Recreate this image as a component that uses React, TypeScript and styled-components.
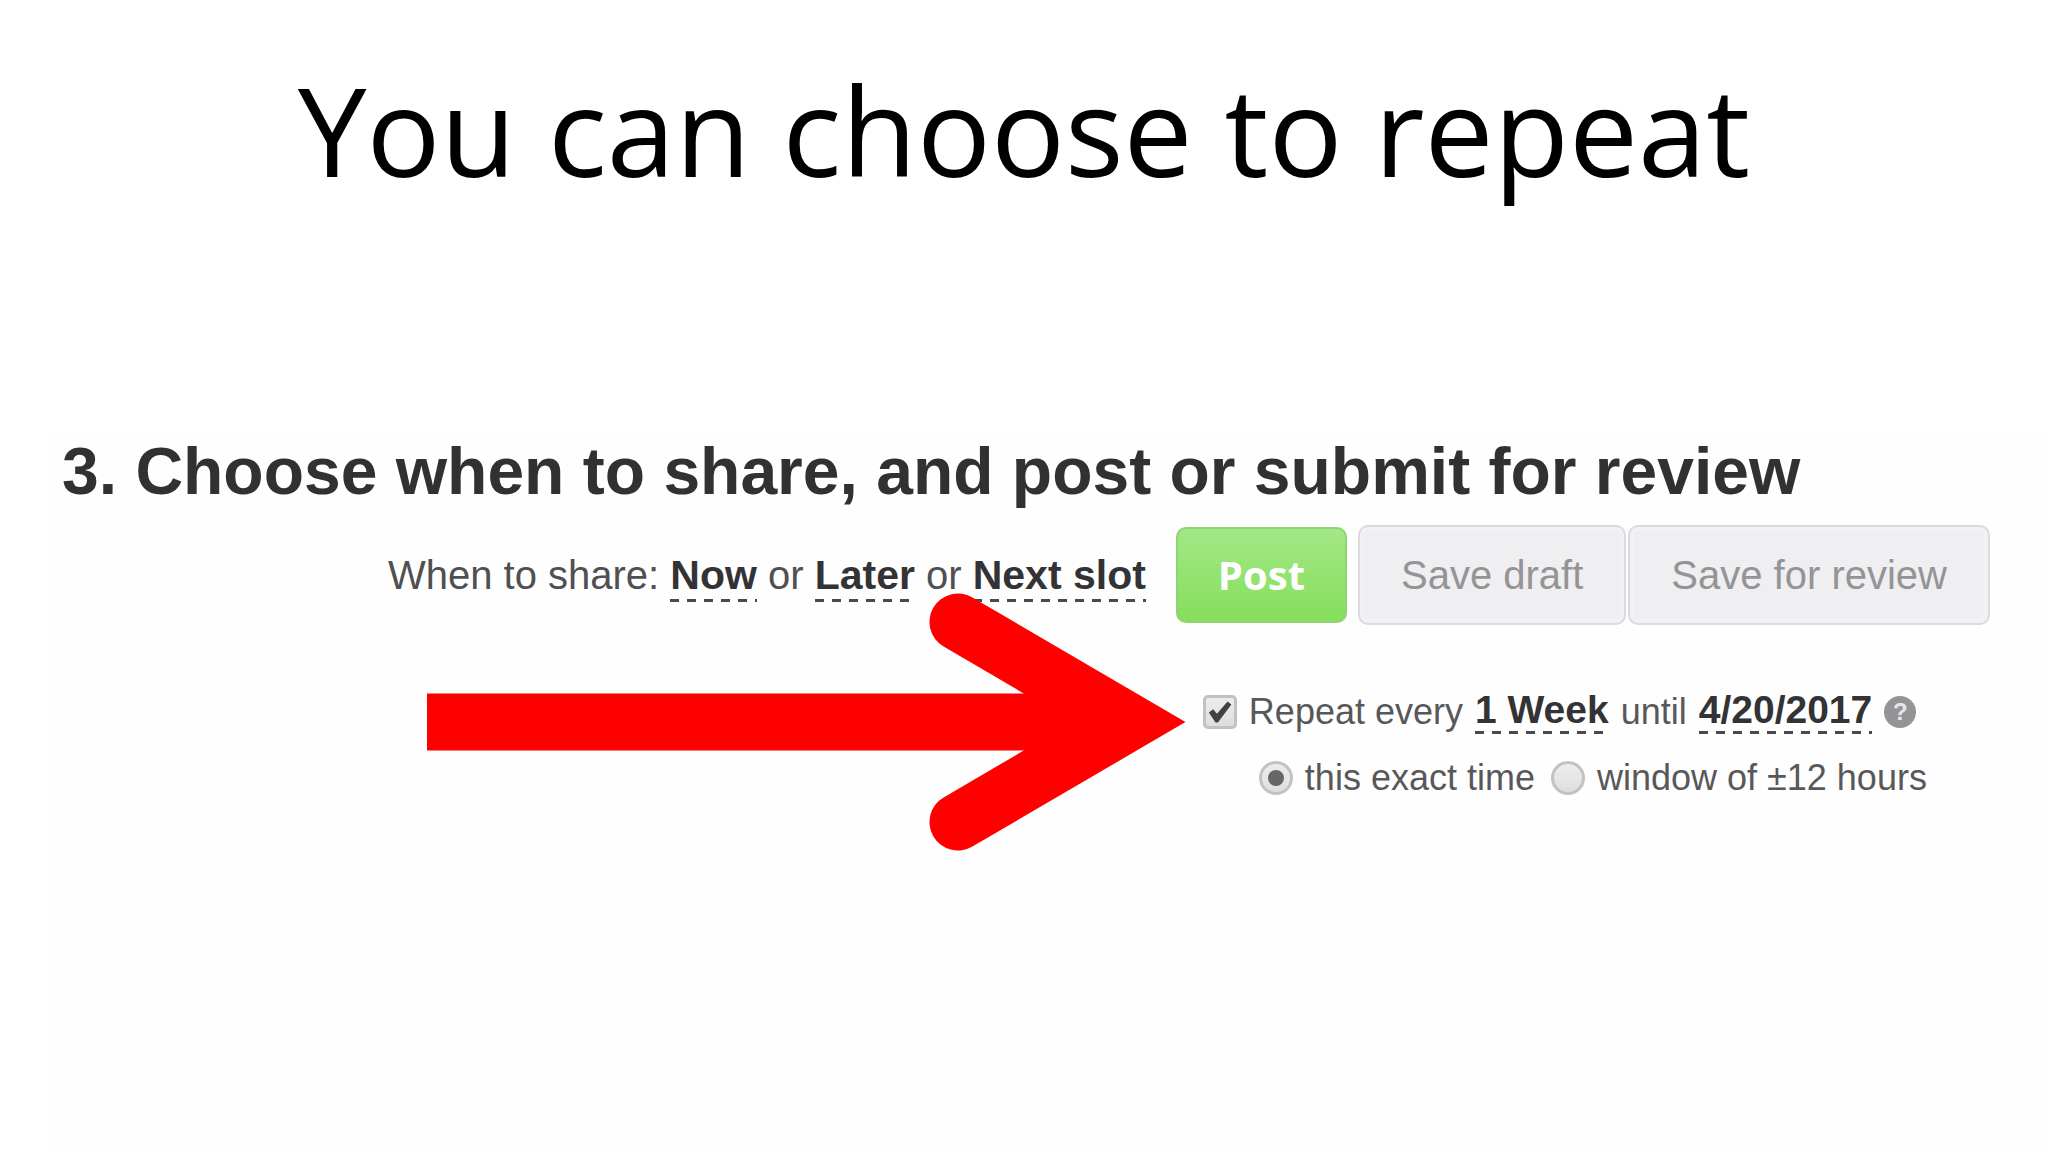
import React from "react";
import styled, { createGlobalStyle, css } from "styled-components";

const GlobalStyle = createGlobalStyle`
  * { box-sizing: border-box; }
  body {
    margin: 0;
    background: #fff;
    color: #333;
    font-family: "Liberation Sans", Arial, sans-serif;
  }
`;

const Slide = styled.main`
  display: flex;
  flex-direction: column;
  min-height: 100vh;
  overflow-x: hidden;
`;

const Title = styled.h1`
  margin: 0;
  padding: 46px 0 0;
  color: #000;
  font: 400 123px/168px "Open Sans", "Noto Sans", sans-serif;
  text-align: center;
`;

const Panel = styled.section`
  flex: 1;
  margin: 217px 0 0 48px;
  padding: 0 58px 0 14px;
  background: #fefefe;
`;

const Heading = styled.h2`
  margin: 0;
  color: #303133;
  font-size: 66px;
  line-height: 80px;
`;

const ShareForm = styled.form`
  display: grid;
  grid-template-columns: 1fr auto;
  column-gap: 30px;
  row-gap: 64px;
  margin-top: 14px;
`;

const When = styled.p`
  align-self: center;
  margin: 0;
  font-size: 40px;
  line-height: 48px;
  text-align: right;
  color: #505052;
  white-space: nowrap;
`;

const Choice = styled.a`
  padding-bottom: 4px;
  background: repeating-linear-gradient(90deg, #4a4a4c 0 9px, transparent 9px 17px) left bottom / 100% 3px no-repeat;
  color: #333335;
  font-size: 41px;
  font-weight: 700;
  text-decoration: none;
`;

const Buttons = styled.div`
  display: flex;
  align-items: center;
  column-gap: 2px;
`;

const Button = styled.button<{ $primary?: boolean }>`
  height: 100px;
  padding: 0 41px;
  border: 2px solid #dcdade;
  border-radius: 10px;
  background: #efeef0;
  color: #949496;
  font: 400 40px/48px "Liberation Sans", Arial, sans-serif;
  white-space: nowrap;
  box-shadow: inset 0 0 0 4px #f2f1f3;

  ${({ $primary }) =>
    $primary &&
    css`
      height: 96px;
      margin-right: 9px;
      padding: 0 40px;
      border-color: #8fd474;
      background: linear-gradient(#a2e886, #86de5c);
      color: #fff;
      font-family: "Open Sans", "Noto Sans", sans-serif;
      font-weight: 700;
      box-shadow: none;
    `}
`;

const Repeat = styled.div`
  position: relative;
  grid-column: 2;
  justify-self: start;
  display: flex;
  flex-direction: column;
  row-gap: 20px;
  margin-left: 27px;
  color: #58585a;
  font-size: 36px;
  line-height: 46px;
  white-space: nowrap;
`;

const Line = styled.div<{ $indent?: boolean }>`
  display: flex;
  align-items: center;
  column-gap: ${({ $indent }) => ($indent ? "16px" : "12px")};
  padding-left: ${({ $indent }) => ($indent ? "56px" : "0")};
`;

const RepeatChoice = styled(Choice)`
  font-size: 39px;
  line-height: 40px;
`;

const Option = styled.label`
  display: flex;
  align-items: center;
  column-gap: 12px;
`;

const Mark = styled.input`
  appearance: none;
  display: grid;
  place-items: center;
  width: 34px;
  height: 34px;
  margin: 0;
  border: 3px solid #c2c2c4;
  background: linear-gradient(#ededee, #dededf);
`;

const CheckBox = styled(Mark)`
  border-radius: 5px;

  &:checked::before {
    content: "";
    width: 24px;
    height: 22px;
    background: #414143;
    clip-path: polygon(4% 52%, 22% 38%, 38% 58%, 82% 2%, 98% 16%, 42% 98%, 32% 98%);
  }
`;

const Radio = styled(Mark)`
  border-radius: 50%;

  &:checked::before {
    content: "";
    width: 16px;
    height: 16px;
    border-radius: 50%;
    background: #666668;
  }
`;

const Help = styled.button`
  width: 32px;
  height: 32px;
  padding: 0;
  border: 0;
  border-radius: 50%;
  background: #949496;
  color: #e6e6e6;
  font: 700 24px/32px "Liberation Sans", Arial, sans-serif;
`;

const Arrow = styled.svg`
  position: absolute;
  top: -97px;
  right: calc(100% + 16px);
  width: 760px;
  height: 260px;
  pointer-events: none;
`;

export default function App() {
  return (
    <Slide>
      <GlobalStyle />
      <Title>You can choose to repeat</Title>
      <Panel>
        <Heading>3. Choose when to share, and post or submit for review</Heading>
        <ShareForm onSubmit={(event) => event.preventDefault()}>
          <When>
            When to share: <Choice href="#now">Now</Choice> or <Choice href="#later">Later</Choice> or{" "}
            <Choice href="#next-slot">Next slot</Choice>
          </When>
          <Buttons>
            <Button type="submit" $primary>
              Post
            </Button>
            <Button type="button">Save draft</Button>
            <Button type="button">Save for review</Button>
          </Buttons>
          <Repeat>
            <Line>
              <Option>
                <CheckBox type="checkbox" defaultChecked />
                Repeat every
              </Option>
              <RepeatChoice href="#interval">1 Week</RepeatChoice>
              <span>until</span>
              <RepeatChoice href="#end-date">4/20/2017</RepeatChoice>
              <Help type="button">?</Help>
            </Line>
            <Line $indent>
              <Option>
                <Radio type="radio" name="timing" defaultChecked />
                this exact time
              </Option>
              <Option>
                <Radio type="radio" name="timing" />
                window of ±12 hours
              </Option>
            </Line>
            <Arrow viewBox="0 0 760 260" fill="none" stroke="#f00" strokeWidth="57" aria-hidden="true">
              <path d="M0 130H702" />
              <path d="M531 30L702 130L531 230" strokeLinecap="round" strokeLinejoin="miter" />
            </Arrow>
          </Repeat>
        </ShareForm>
      </Panel>
    </Slide>
  );
}
